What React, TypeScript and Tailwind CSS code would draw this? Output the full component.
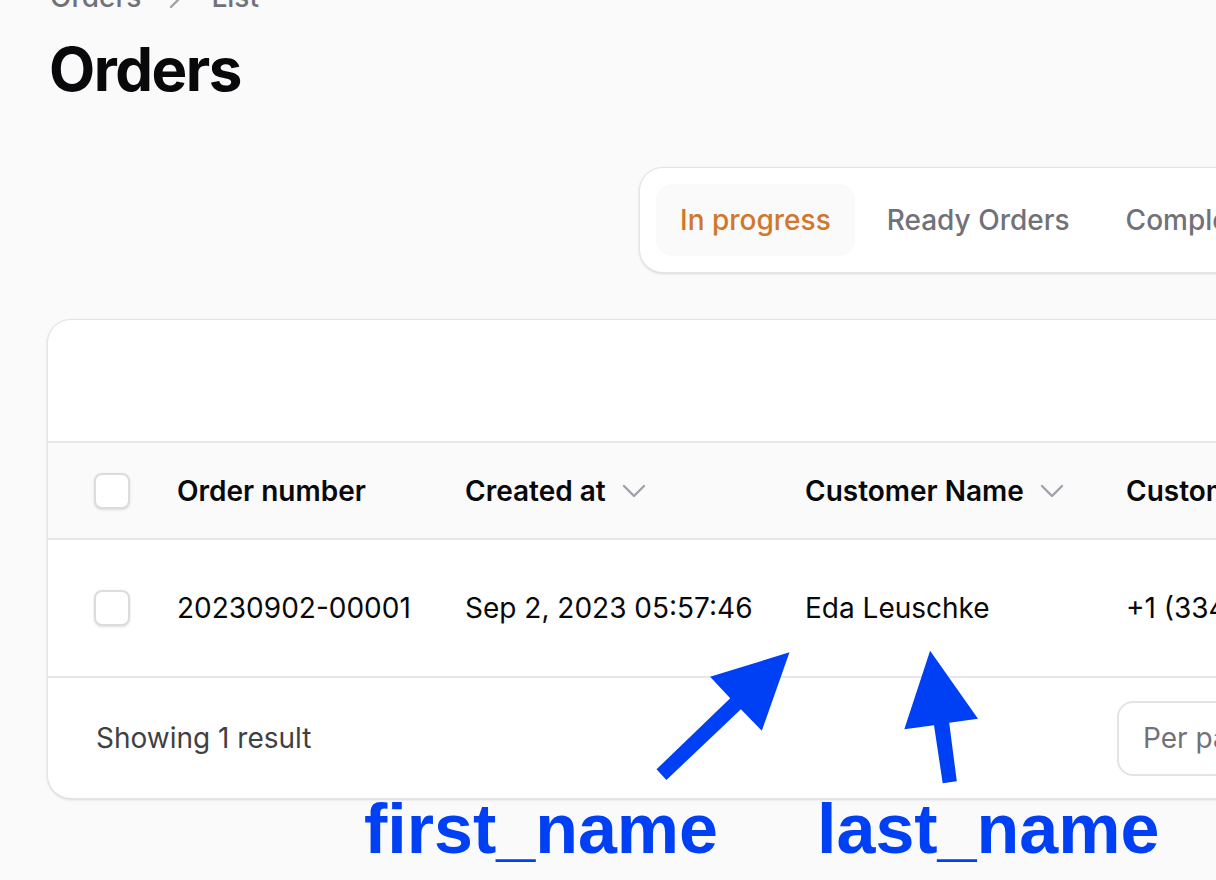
import { ReactNode } from "react";

function Checkbox() {
  return (
    <div className="h-9 w-9 rounded-lg border-2 border-[#dcdce0] bg-white shadow-sm" />
  );
}

function SortIcon() {
  return (
    <svg width="24" height="14" viewBox="0 0 24 14" className="ml-4 shrink-0">
      <polyline
        points="2,2 12,12 22,2"
        fill="none"
        stroke="#a1a1aa"
        strokeWidth="2.4"
        strokeLinecap="round"
        strokeLinejoin="round"
      />
    </svg>
  );
}

function Cell({ w, children }: { w: string; children: ReactNode }) {
  return <div className={`flex shrink-0 items-center px-6 ${w}`}>{children}</div>;
}

const tabs = ["In progress", "Ready Orders", "Completed Orders"];

export default function App() {
  return (
    <div className="relative h-[880px] w-[1216px] overflow-hidden bg-[#fafafa] font-['Inter',sans-serif] text-[#09090b]">
      <div className="pl-[47px]">
        <nav className="mt-[-23px] flex h-10 items-center gap-x-7 pl-[3px] text-[28px] font-medium leading-10 text-[#71717a]">
          <span>Orders</span>
          <svg width="14" height="24" viewBox="0 0 14 24">
            <polyline
              points="2,2 12,12 2,22"
              fill="none"
              stroke="#a1a1aa"
              strokeWidth="2.4"
              strokeLinecap="round"
              strokeLinejoin="round"
            />
          </svg>
          <span>List</span>
        </nav>

        <h1 className="mt-4 pl-[2px] text-[60px] font-bold leading-[72px] tracking-tight">
          Orders
        </h1>

        <div className="mt-[62px] ml-[592px] flex w-[760px] gap-x-2 rounded-3xl border border-[#e4e4e7] bg-white p-4 shadow-sm">
          {tabs.map((t, i) => (
            <div
              key={t}
              className={`whitespace-nowrap rounded-2xl px-6 py-4 text-[28px] font-medium leading-10 ${
                i === 0 ? "bg-[#fafafa] text-[#d0772b]" : "text-[#71717a]"
              }`}
            >
              {t}
            </div>
          ))}
        </div>

        <div className="mt-[46px] w-[1400px] overflow-hidden rounded-3xl border border-[#e4e4e7] bg-white shadow-sm">
          <div className="h-[121px]" />

          <div className="flex h-[99px] items-center border-y-2 border-[#e7e7ea] bg-[#fafafa] text-[28px] font-semibold leading-10">
            <div className="flex w-[105px] shrink-0 items-center pl-[46px]">
              <Checkbox />
            </div>
            <Cell w="w-[288px]">Order number</Cell>
            <Cell w="w-[340px]">
              Created at
              <SortIcon />
            </Cell>
            <Cell w="w-[321px]">
              Customer Name
              <SortIcon />
            </Cell>
            <Cell w="w-[300px]">Customer Phone</Cell>
          </div>

          <div className="flex h-[138px] items-center border-b-2 border-[#e7e7ea] text-[28px] leading-10">
            <div className="flex w-[105px] shrink-0 items-center pl-[46px]">
              <Checkbox />
            </div>
            <Cell w="w-[288px]">20230902-00001</Cell>
            <Cell w="w-[340px]">Sep 2, 2023 05:57:46</Cell>
            <Cell w="w-[321px]">Eda Leuschke</Cell>
            <Cell w="w-[300px]">+1 (334) 555-0199</Cell>
          </div>

          <div className="flex h-[120px] items-center pl-12 text-[28px] leading-10 text-[#3f3f46]">
            <span className="w-[1021px] shrink-0">Showing 1 result</span>
            <div className="flex h-[75px] w-[260px] items-center rounded-2xl border-2 border-[#e4e4e7] px-6 text-[#71717a]">
              Per page
            </div>
          </div>
        </div>
      </div>

      <svg
        className="pointer-events-none absolute left-0 top-0"
        width="1216"
        height="880"
        viewBox="0 0 1216 880"
      >
        <polygon
          fill="#0040f5"
          points="789.5,652.3 761.8,730.7 740.9,709.3 666.4,780 656.5,769.3 730.2,698.3 710.1,676.7"
        />
        <polygon
          fill="#0040f5"
          points="930.1,650.7 978,718.7 949.2,722.7 956.8,781.3 942.7,783.3 934,725.3 904.3,729.3"
        />
      </svg>
      <div className="pointer-events-none absolute left-[364px] top-[789px] font-['Liberation_Sans',Arial,sans-serif] text-[70px] font-bold leading-[80px] text-[#0040f5]">
        first_name
      </div>
      <div className="pointer-events-none absolute left-[817px] top-[789px] font-['Liberation_Sans',Arial,sans-serif] text-[70px] font-bold leading-[80px] text-[#0040f5]">
        last_name
      </div>
    </div>
  );
}
